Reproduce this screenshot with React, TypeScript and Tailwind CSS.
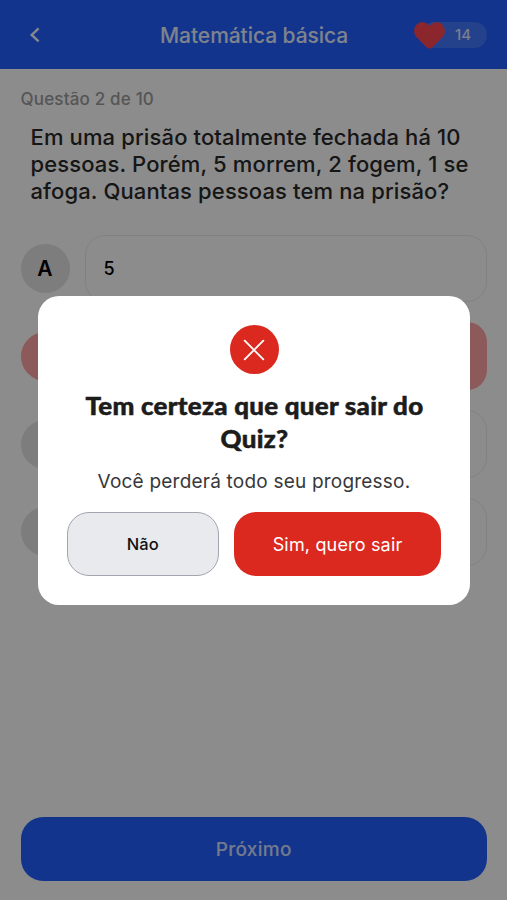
import React from "react";

type Option = { letter: string; text: string; wrong?: boolean };

const options: Option[] = [
  { letter: "A", text: "5" },
  { letter: "B", text: "", wrong: true },
  { letter: "C", text: "" },
  { letter: "D", text: "" },
];

function Header() {
  return (
    <header className="flex h-[69px] shrink-0 items-center bg-[#2160ff] pl-[29px] pr-5 pt-px">
      <svg className="h-4 w-3" viewBox="0 0 12 16" fill="none" stroke="white" strokeOpacity="0.95" strokeWidth="2.4">
        <path d="M9.6 1.400 2.700 8l6.900 6.400" />
      </svg>
      <h1 className="ml-[119px] whitespace-nowrap pt-0.5 text-[21px] font-medium leading-7 tracking-[-0.06px] text-white/90">
        Matemática básica
      </h1>
      <div className="relative ml-auto flex h-[26px] w-[66px] items-center justify-end rounded-full bg-white/15 pr-4">
        <svg className="absolute -left-[7px] top-0 h-[27px] w-[31px]" viewBox="0 0 32 27" preserveAspectRatio="none" fill="#ff4652">
          <path d="M16 26.500c-1.200 0-2.200-.5-3.300-1.600L2.400 15C-2.100 10.300.4.900 8 .3c3.500-.1 6.200 1.300 8 3.700C17.800 1.600 20.500.2 24 .3c7.600.6 10.100 10 5.600 14.700L19.300 24.900c-1.100 1.100-2.100 1.600-3.300 1.600z" />
        </svg>
        <span className="text-[15px] font-medium leading-5 text-white/80">14</span>
      </div>
    </header>
  );
}

function OptionRow({ letter, text, wrong }: Option) {
  return (
    <div className="flex items-center gap-[15px]">
      <div
        className={`flex size-[49px] items-center justify-center rounded-full text-[21px] font-semibold text-black ${
          wrong ? "bg-[#ffa4a4]" : "bg-[#e4e4e4]"
        }`}
      >
        {letter}
      </div>
      <div
        className={`flex h-[67.5px] flex-1 items-center rounded-[20px] pl-[18px] text-[18px] font-medium text-black ${
          wrong ? "bg-[#ffa4a4]" : "border border-[#ececec]"
        }`}
      >
        {text}
      </div>
    </div>
  );
}

function ExitDialog() {
  return (
    <div
      role="dialog"
      className="flex h-[309px] w-[432.5px] flex-col items-center rounded-[21px] bg-white px-[29px] pt-[29.5px] text-[#1c1c1c]"
    >
      <div className="flex size-[49px] shrink-0 items-center justify-center rounded-full bg-[#db291f]">
        <svg className="size-[22px]" viewBox="0 0 22 22" stroke="white" strokeWidth="1.900" strokeLinecap="round">
          <path d="M1.700 1.700l18.600 18.600M20.300 1.700L1.700 20.300" />
        </svg>
      </div>
      <h2 className="mt-[15px] scale-x-[1.08] whitespace-nowrap text-center font-[Lato,sans-serif] text-[24px] font-black leading-[33px] tracking-[0.25px] [-webkit-text-stroke:0.5px_#1c1c1c]">
        Tem certeza que quer sair do
        <br />
        Quiz?
      </h2>
      <p className="mt-[13px] whitespace-nowrap text-[19px] leading-7 tracking-[0.21px] text-[#38383b]">
        Você perderá todo seu progresso.
      </p>
      <div className="mt-[16px] flex w-full gap-[15px]">
        <button className="h-[64px] w-[152px] rounded-[22px] border border-[#a0a5af] bg-[#e8eaee] text-[16.5px] font-medium text-[#111]">
          Não
        </button>
        <button className="h-[64px] flex-1 whitespace-nowrap rounded-[22px] bg-[#db291f] text-[18px] tracking-[0.17px] text-white">
          Sim, quero sair
        </button>
      </div>
    </div>
  );
}

export default function App() {
  return (
    <div className="relative flex h-[900px] w-[507px] flex-col overflow-hidden bg-white font-[Inter,sans-serif]">
      <Header />
      <main className="flex flex-1 flex-col pb-[19.5px] pl-[20.5px] pr-5 pt-[18px]">
        <p className="text-[17px] font-medium leading-6 tracking-[0.18px] text-[#9c9c9c]">Questão 2 de 10</p>
        <p className="mt-[13px] whitespace-nowrap pl-[10px] text-[22px] font-medium leading-[27px] tracking-[0.13px] text-[#292929]">
          Em uma prisão totalmente fechada há 10
          <br />
          pessoas. Porém, 5 morrem, 2 fogem, 1 se
          <br />
          afoga. Quantas pessoas tem na prisão?
        </p>
        <div className="mt-[29.7px] flex flex-col gap-[20.3px]">
          {options.map((option) => (
            <OptionRow key={option.letter} {...option} />
          ))}
        </div>
        <button className="mt-auto h-[63.5px] rounded-[22px] bg-[#2160ff] pt-0.5 text-[19px] font-medium tracking-[0.3px] text-white/80">
          Próximo
        </button>
      </main>
      <div className="absolute inset-0 flex justify-center bg-black/45 pl-px pt-[295.5px]">
        <ExitDialog />
      </div>
    </div>
  );
}
